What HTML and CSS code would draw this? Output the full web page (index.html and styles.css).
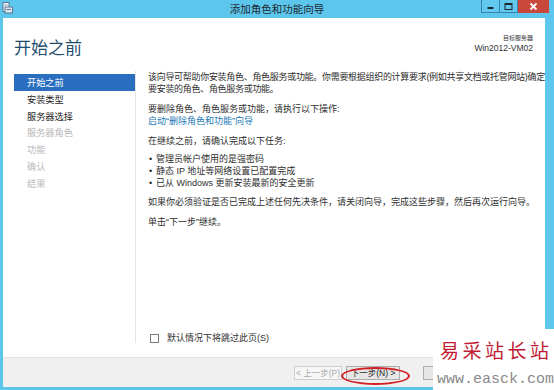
FILE: index.html
```html
<!DOCTYPE html>
<html lang="zh-CN">
<head>
  <meta charset="UTF-8">
  <title>添加角色和功能向导</title>
  <link rel="stylesheet" href="styles.css">
</head>
<body>
  <div class="window">
    <div class="titlebar">
      <svg class="app-icon" width="11" height="12" viewBox="0 0 11 12">
        <rect x="1" y="0.5" width="6" height="9" fill="#f4f8fb" stroke="#5a7896"/>
        <rect x="3" y="5" width="7.5" height="6" fill="#dfe8ef" stroke="#5a7896"/>
        <line x1="4.5" y1="7.5" x2="9" y2="7.5" stroke="#5a7896"/>
        <line x1="2.5" y1="3" x2="5.5" y2="3" stroke="#8aa3b8"/>
      </svg>
      <div class="title">添加角色和功能向导</div>
      <svg class="caption" width="68" height="13" viewBox="0 0 68 13">
        <rect x="0.5" y="-1" width="36" height="13.5" fill="#62c9ee" stroke="#3a83ad"/>
        <line x1="18.5" y1="0" x2="18.5" y2="13" stroke="#3a83ad"/>
        <rect x="6.5" y="7" width="6" height="2" fill="#1c2731"/>
        <rect x="24" y="3.5" width="7" height="6" fill="none" stroke="#1c2731"/>
        <rect x="24" y="3" width="7" height="2" fill="#1c2731"/>
        <rect x="37" y="0" width="31" height="13" fill="#c9473b"/>
        <path d="M49.5 3.5 L55.5 9.5 M55.5 3.5 L49.5 9.5" stroke="#fff" stroke-width="1.8"/>
      </svg>
    </div>

    <div class="frame">
      <header class="head">
        <h1>开始之前</h1>
        <div class="target">
          <div class="target-label">目标服务器</div>
          <div class="target-name">Win2012-VM02</div>
        </div>
      </header>

      <div class="main">
        <ul class="steps">
          <li class="active">开始之前</li>
          <li>安装类型</li>
          <li>服务器选择</li>
          <li class="off">服务器角色</li>
          <li class="off">功能</li>
          <li class="off">确认</li>
          <li class="off">结果</li>
        </ul>

        <div class="content">
          <p class="intro">该向导可帮助你安装角色、角色服务或功能。你需要根据组织的计算要求(例如共享文档或托管网站)确定要安装的角色、角色服务或功能。</p>
          <p>要删除角色、角色服务或功能，请执行以下操作:<br><a href="#">启动“删除角色和功能”向导</a></p>
          <p>在继续之前，请确认完成以下任务:</p>
          <ul class="tasks">
            <li>管理员帐户使用的是强密码</li>
            <li>静态 IP 地址等网络设置已配置完成</li>
            <li>已从 Windows 更新安装最新的安全更新</li>
          </ul>
          <p>如果你必须验证是否已完成上述任何先决条件，请关闭向导，完成这些步骤，然后再次运行向导。</p>
          <p>单击“下一步”继续。</p>

          <label class="skip"><span class="box"></span>默认情况下将跳过此页(S)</label>
        </div>
      </div>

      <footer class="foot">
        <button class="btn" disabled>&lt; 上一步(P)</button>
        <button class="btn btn-next">下一步(N) &gt;</button>
        <button class="btn btn-install">安装(I)</button>
        <button class="btn">取消</button>
      </footer>
    </div>

    <span class="ring"></span>

    <div class="stamp">
      <div class="stamp-name">易采站长站</div>
      <div class="stamp-url">www.easck.com</div>
    </div>
  </div>
</body>
</html>
```

FILE: styles.css
```css
* {
  margin: 0;
  padding: 0;
  box-sizing: border-box;
}

body {
  font-family: "Liberation Sans", "Noto Sans CJK SC", sans-serif;
  background: #ffffff;
  color: #333;
}

.window {
  position: relative;
  width: 554px;
  height: 390px;
  background: #5cc6ec;
  display: flex;
  flex-direction: column;
  overflow: hidden;
}

/* Title bar */
.titlebar {
  height: 18px;
  flex: none;
  display: grid;
  grid-template-columns: 73px 1fr 73px;
  align-items: start;
}

.app-icon {
  margin: 2px 0 0 2px;
}

.title {
  text-align: center;
  font-family: "Noto Sans CJK SC", sans-serif;
  font-size: 10.5px;
  line-height: 17px;
  color: #1e2a33;
}

.caption {
  display: block;
}

/* White client area */
.frame {
  flex: 1;
  margin: 0 9px 3px 3px;
  background: #fff;
  display: flex;
  flex-direction: column;
}

.head {
  height: 53px;
  display: flex;
  justify-content: space-between;
  padding: 0 12px 0 11px;
}

.head h1 {
  font-family: "Noto Sans CJK SC", sans-serif;
  font-weight: normal;
  font-size: 17px;
  line-height: 20px;
  margin-top: 19px;
  color: #1f4d6d;
}

.target {
  margin-top: 16px;
  text-align: right;
  color: #333;
}

.target-label {
  font-family: "Noto Sans CJK SC", sans-serif;
  font-size: 6px;
  line-height: 8px;
}

.target-name {
  font-size: 8.5px;
  line-height: 10px;
  margin-top: 1px;
}

/* Steps + page */
.main {
  flex: 1;
  display: flex;
  padding-bottom: 14px;
}

.steps {
  list-style: none;
  width: 133px;
  padding: 3px 0 0 11px;
  border-right: 1px solid #e4e4e4;
  font-family: "Noto Sans CJK SC", sans-serif;
  font-size: 9.2px;
}

.steps li {
  height: 16.8px;
  line-height: 16.8px;
  padding-left: 13px;
  color: #1d1d1d;
}

.steps li.active {
  background: #2a6fbf;
  color: #fff;
}

.steps li.off {
  color: #b9b9b9;
}

.content {
  flex: 1;
  display: flex;
  flex-direction: column;
  padding: 0 0 0 12px;
  font-size: 9px;
  line-height: 12px;
  color: #2e2e2e;
}

.content p {
  margin-bottom: 8px;
}

.content .intro {
  letter-spacing: -0.3px;
}

.content a {
  color: #2277b5;
  text-decoration: none;
}

.tasks {
  list-style: none;
  margin: -2px 0 7px;
}

.tasks li::before {
  content: "•";
  display: inline-block;
  width: 7px;
  margin-left: 1px;
}

.skip {
  margin-top: auto;
  display: flex;
  align-items: center;
  gap: 8px;
  padding-left: 2px;
  line-height: 10px;
}

.skip .box {
  width: 9px;
  height: 9px;
  border: 1px solid #7a7a7a;
  background: #fff;
}

/* Buttons */
.foot {
  height: 30px;
  background: #f0f0f0;
  border-top: 1px solid #e2e2e2;
  display: flex;
  justify-content: flex-end;
  align-items: center;
  gap: 4px;
  padding-right: 10px;
}

.btn {
  height: 14px;
  width: 54px;
  font-family: "Liberation Sans", "Noto Sans CJK SC", sans-serif;
  font-size: 8.5px;
  line-height: 12px;
  background: #e6e6e6;
  border: 1px solid #acacac;
  color: #222;
}

.btn[disabled] {
  width: 48px;
  background: #f7f7f7;
  border-color: #cfcfcf;
  color: #a8a8a8;
}

.btn-next {
  margin-right: 19px;
}

/* Red annotation round the next button */
.ring {
  position: absolute;
  left: 341px;
  top: 367px;
  width: 69px;
  height: 18px;
  border: 2px solid #d31f26;
  border-radius: 50%;
}

/* Site stamp in the corner */
.stamp {
  position: absolute;
  right: 0;
  bottom: 0;
  width: 121px;
  height: 61px;
  background: #fff;
  padding: 10px 0 0 4px;
  white-space: nowrap;
}

.stamp-name {
  font-family: "Noto Sans CJK SC", serif;
  font-size: 19px;
  line-height: 22px;
  letter-spacing: 3.5px;
  color: #c01a32;
  padding-left: 3px;
}

.stamp-url {
  margin-top: 10px;
  font-family: "Liberation Mono", monospace;
  font-size: 15px;
  line-height: 17px;
  color: #8a8a8a;
}
```
